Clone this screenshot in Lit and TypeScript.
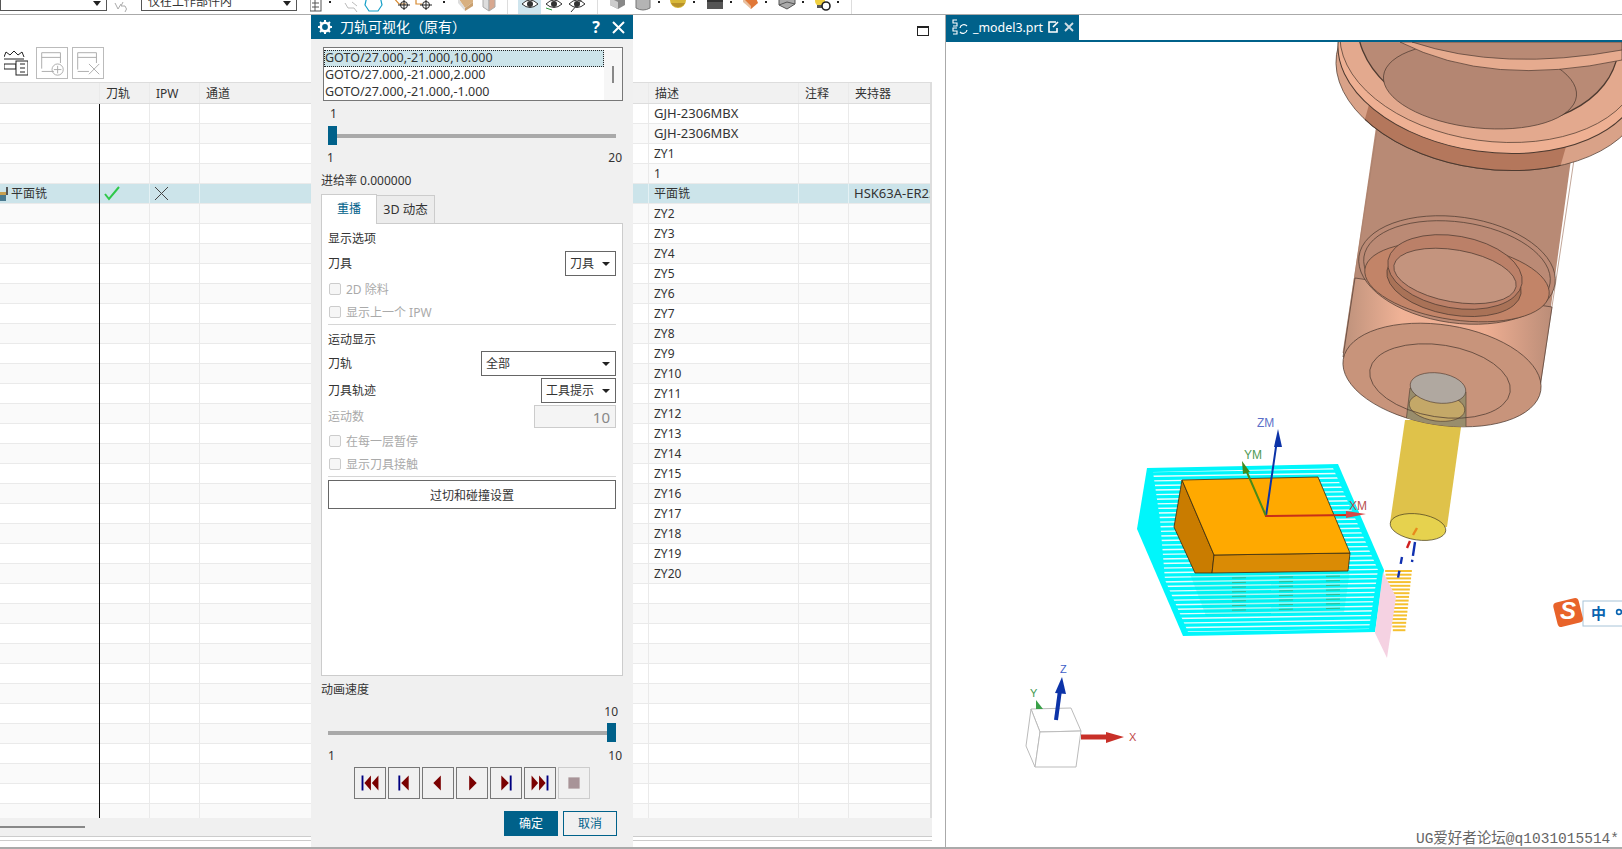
import { LitElement, css, html, svg } from 'lit';
import { customElement } from 'lit/decorators.js';

const descriptions = [
    'GJH-2306MBX', 'GJH-2306MBX', 'ZY1', '1', '平面铣',
    ...Array.from({ length: 19 }, (_, i) => `ZY${i + 2}`),
];

const range = (from: number, to: number, step: number) => {
    const out: number[] = [];
    for (let v = from; v <= to; v += step) out.push(v);
    return out;
};

const toolbarIcons = svg`
    <g transform="translate(-310,0)">
        <g fill="none" stroke="#555"><rect x="310" y="-4" width="11" height="15"/><path d="M315 -4v15M312 3h7M312 7h7"/></g>
        <rect x="329" y="1" width="2" height="2" fill="#222"/>
        <path d="M345 3l3 5h6l3 4M352 2l5 4" fill="none" stroke="#bbb"/>
        <path d="M367 -4l-2 9 4 6h9l4-6-2-9" fill="none" stroke="#16a0c8" stroke-width="1.2"/>
        <path d="M393 -3l6 7h7" fill="none" stroke="#d88a30" stroke-width="1.2"/>
        <g fill="none" stroke="#222"><circle cx="404" cy="5" r="3.5"/><path d="M404 -1v11M398 5h12"/></g>
        <path d="M416 -2v6h6" fill="none" stroke="#d88a30" stroke-width="1.2"/>
        <g fill="none" stroke="#222"><circle cx="426" cy="5" r="3.5"/><path d="M426 -1v11M420 5h12"/></g>
        <rect x="443" y="1" width="2" height="2" fill="#222"/>
        <path d="M458 -2l7 10 8-6v-4z" fill="#d8b080"/><path d="M458 -2v5l7 8v-3z" fill="#ddd"/><path d="M465 8v3l8-5v-4z" fill="#c9a070"/>
        <path d="M483 -2v9l6 4v-11z" fill="#ddd" stroke="#aaa"/><path d="M489 0v11l6-4v-9z" fill="#d8a890" stroke="#aaa"/>
        <rect x="507" y="0" width="1" height="14" fill="#ddd"/>
        <rect x="518" y="0" width="23" height="14" fill="#cfe5ee"/>
        ${[530, 554, 577].map((x, i) => svg`
            <path d="M${x - 8} 4q8-8 16 0q-8 7-16 0z" fill="#fff" stroke="#333"/>
            <circle cx="${x}" cy="4" r="3" fill="#333"/>
            ${i === 1 ? svg`<path d="M${x - 8} 8l6 2" stroke="#2a9a3a"/>` : ''}
            ${i === 2 ? svg`<path d="M${x - 6} 12l12-14" stroke="#333"/>` : ''}
        `)}
        <rect x="597" y="0" width="1" height="14" fill="#ddd"/>
        <path d="M610 -2v7l8 4 7-4v-7z" fill="#888"/><path d="M610 5l8 4v-7l-8-4z" fill="#ccc"/>
        <path d="M636 -2v10q7 4 14 0v-10z" fill="#b4b4b4" stroke="#777"/>
        <circle cx="678" cy="0" r="8" fill="#d8b838"/><path d="M671 3a8 8 0 0 0 14 0z" fill="#b8922a"/>
        <rect x="707" y="-2" width="16" height="11" fill="#555"/><rect x="707" y="-2" width="16" height="4" fill="#333"/>
        <path d="M743 -2l8 11 7-6-2-5z" fill="#e07838"/><path d="M743 -2v4l8 7v-3z" fill="#e8c0a0"/>
        <path d="M779 -2v7l8 4 8-5v-6z" fill="#aaa" stroke="#555"/><path d="M779 5l8-3 8 2" fill="none" stroke="#555"/>
        <circle cx="820" cy="1" r="5" fill="#f0d040"/><rect x="817" y="5" width="6" height="3" fill="#555"/>
        <circle cx="826" cy="6" r="4" fill="#fff" stroke="#222" stroke-width="1.6"/>
        <rect x="851" y="0" width="1" height="14" fill="#ddd"/>
        ${[658, 693, 730, 765, 802, 837].map((x) => svg`<rect x="${x}" y="1" width="2" height="2" fill="#222"/>`)}
    </g>
`;

const holder = svg`
    <defs>
        <clipPath id="shank-clip"><polygon points="1377,100 1343,353 1540,387 1580,100"/></clipPath>
        <clipPath id="nose-clip"><ellipse cx="1442" cy="375" rx="100" ry="50" transform="rotate(9 1442 375)"/></clipPath>
        <linearGradient id="band" x1="0" x2="1" y1="0" y2="0">
            <stop offset="0" stop-color="#bd917b"/>
            <stop offset="0.28" stop-color="#f0b296"/>
            <stop offset="0.68" stop-color="#eeae92"/>
            <stop offset="1" stop-color="#bb8d78"/>
        </linearGradient>
    </defs>
    <g stroke="#4d3a30" stroke-width="0.7">
        <!-- shank sits behind the flange -->
        <polygon points="1377,120 1343,353 1540,387 1575,130" fill="#b88a75" stroke="none"/>
        <line x1="1377" y1="130" x2="1343" y2="353" stroke="#a8806c"/>
        <line x1="1575" y1="153" x2="1540" y2="387" stroke="#a8806c"/>

        <!-- flange cut by the tab strip -->
        <ellipse cx="1490" cy="76" rx="155" ry="93" transform="rotate(8 1490 76)" fill="#d9a288"/>
        <ellipse cx="1490" cy="76" rx="155" ry="93" transform="rotate(8 1490 76)" fill="#b4775c" clip-path="url(#shank-clip)" stroke-width="1"/>
        <ellipse cx="1490" cy="60" rx="153" ry="92" transform="rotate(8 1490 60)" fill="#eeb093" stroke-width="1"/>
        <ellipse cx="1490" cy="50" rx="151" ry="91" transform="rotate(8 1490 50)" fill="#e3a98e"/>
        <ellipse cx="1488" cy="35" rx="131" ry="90" transform="rotate(8 1488 35)" fill="#b98a75" stroke-width="1.3"/>
        <ellipse cx="1480" cy="86" rx="97" ry="42" transform="rotate(6 1480 86)" fill="#b48672"/>
        <path d="M1400 42q90 46 222 18v-18z" fill="#e6ab8f"/>
        <path d="M1412 42q90 30 210 8v-8z" fill="#b98a75"/>

        <!-- lower collar: the light band is what the two ellipses leave free -->
        <path d="M1355 278 1343 357 1540 387 1552 307z" fill="url(#band)"/>
        <ellipse cx="1442" cy="375" rx="100" ry="50" transform="rotate(9 1442 375)" fill="#c8947b"/>
        <ellipse cx="1457" cy="270" rx="99" ry="53" transform="rotate(8 1457 270)" fill="#bb8a75"/>
        <ellipse cx="1457" cy="270" rx="94" ry="48" transform="rotate(8 1457 270)" fill="none"/>
        <ellipse cx="1457" cy="282" rx="93" ry="38" transform="rotate(8 1457 282)" fill="#c28468"/>
        <ellipse cx="1454" cy="282" rx="68" ry="33" transform="rotate(10 1454 282)" fill="#a97257"/>
        <ellipse cx="1455" cy="272" rx="68" ry="36" transform="rotate(10 1455 272)" fill="#bb8068"/>
        <ellipse cx="1455" cy="276" rx="62" ry="26" transform="rotate(10 1455 276)" fill="#c4947e"/>
    </g>
`;

const cyanPath = svg`
    <clipPath id="cyan-inner"><polygon points="1153,472 1333,468 1378,570 1369,629 1188,632 1165,580 1160,520"/></clipPath>
    <polygon points="1147,468 1338,464 1384,570 1375,632 1183,636 1137,529" fill="#00f6fb"/>
    <g clip-path="url(#cyan-inner)" stroke="#e8fdfd" stroke-width="1.4">
        ${range(470, 636, 4.6).map((y) => svg`<line x1="1130" y1="${y + 2}" x2="1390" y2="${y - 2}"/>`)}
    </g>
    <polygon points="1190,574 1350,570 1344,612 1206,616" fill="#00e8d8" fill-opacity="0.25"/>
    <g stroke="#2fb890" stroke-width="1" stroke-dasharray="14 33">
        ${range(578, 612, 4.6).map((y) => svg`<line x1="1232" y1="${y}" x2="1345" y2="${y - 2}"/>`)}
    </g>
`;

const block = svg`
    <g stroke="#3a2a10" stroke-width="0.8" stroke-linejoin="round">
        <polygon points="1182,480 1174,527 1195,573 1212,573 1214,555" fill="#c97c00"/>
        <polygon points="1214,555 1350,553 1348,571 1212,573" fill="#da8b05"/>
        <polygon points="1182,480 1318,477 1350,553 1214,555" fill="#ffa900"/>
    </g>
    <g stroke-linecap="round">
        <line x1="1266" y1="516" x2="1277" y2="440" stroke="#0c33a8" stroke-width="2"/>
        <polygon points="1278,429 1282,447 1274,447" fill="#0c33a8"/>
        <line x1="1266" y1="516" x2="1246" y2="470" stroke="#4a8a18" stroke-width="2"/>
        <polygon points="1242,461 1250,472 1243,474" fill="#3f8a1c"/>
        <line x1="1266" y1="516" x2="1350" y2="515" stroke="#c83018" stroke-width="2"/>
        <polygon points="1366,514 1346,511 1346,518" fill="#d84848"/>
    </g>
    <g font-family="Liberation Sans, sans-serif" font-size="12">
        <text x="1257" y="427" fill="#5c70c8">ZM</text>
        <text x="1244" y="459" fill="#4f9a55">YM</text>
        <text x="1349" y="510" fill="#b85050">XM</text>
    </g>
`;

const cutter = svg`
    <g stroke="#f5c030" stroke-width="2">
        ${range(571, 632, 3.7).map((y) => svg`<line x1="${1385 + (y - 570) * 0.13}" y1="${y}" x2="${1412 - (y - 570) * 0.11}" y2="${y}"/>`)}
    </g>
    <polygon points="1383,572 1375,633 1387,658 1396,597" fill="#f5d2e2"/>
    <path d="M1405 420 1390 523 1447 527 1462 420z" fill="#dfc24a"/>
    <ellipse cx="1418" cy="527" rx="28" ry="13" transform="rotate(8 1418 527)" fill="#e6d24e" stroke="#4a4020" stroke-width="0.7"/>
    <line x1="1417" y1="528" x2="1413" y2="535" stroke="#e88a1c" stroke-width="2.4"/>
    <line x1="1410" y1="541" x2="1407" y2="548" stroke="#d02020" stroke-width="2.4"/>
    <line x1="1415" y1="542" x2="1412" y2="562" stroke="#1030b0" stroke-width="2.4" stroke-dasharray="14 4"/>
    <line x1="1402" y1="557" x2="1398" y2="578" stroke="#1030b0" stroke-width="2.4" stroke-dasharray="7 7"/>
`;

const overlayTip = svg`
    <g clip-path="url(#nose-clip)" stroke="#4d3a30" stroke-width="0.6">
        <path d="M1410 388 1405 430 1466 430 1466 392z" fill="#998d6c"/>
        <ellipse cx="1437" cy="407" rx="28" ry="14" transform="rotate(8 1437 407)" fill="#c4a868"/>
        <ellipse cx="1438" cy="388" rx="28" ry="15" transform="rotate(8 1438 388)" fill="#b0a8a0"/>
    </g>
    <ellipse cx="1440" cy="381" rx="71" ry="36" transform="rotate(9 1440 381)" fill="none" stroke="#4d3a30" stroke-width="0.7"/>
`;

const triad = svg`
    <g fill="#fff" stroke="#bbb" stroke-width="1">
        <polygon points="1031,709 1071,708 1081,731 1040,732"/>
        <polygon points="1031,709 1040,732 1035,767 1026,746"/>
        <polygon points="1040,732 1081,731 1076,767 1035,767"/>
    </g>
    <polygon points="1036,700 1043,709 1036,709" fill="#3aa048"/>
    <line x1="1056" y1="720" x2="1060" y2="690" stroke="#0c33a8" stroke-width="4"/>
    <polygon points="1062,677 1066,694 1055,693" fill="#0c33a8"/>
    <line x1="1081" y1="737" x2="1108" y2="737" stroke="#c83028" stroke-width="5"/>
    <polygon points="1124,737 1106,732 1106,743" fill="#c83028"/>
    <g font-family="Liberation Sans, sans-serif" font-size="11">
        <text x="1060" y="673" fill="#4060c8">Z</text>
        <text x="1030" y="697" fill="#3f9a50">Y</text>
        <text x="1129" y="741" fill="#c04848">X</text>
    </g>
`;

const transport = [
    svg`<rect x="7" y="8" width="2" height="16" fill="#000080"/><path d="M10 16l7-8v16zM18 16l7-8v16z" fill="#7a0000"/>`,
    svg`<rect x="10" y="8" width="2" height="16" fill="#000080"/><path d="M13 16l8-8v16z" fill="#7a0000"/>`,
    svg`<path d="M11 16l8-8v16z" fill="#7a0000"/>`,
    svg`<path d="M21 16l-8-8v16z" fill="#7a0000"/>`,
    svg`<rect x="20" y="8" width="2" height="16" fill="#000080"/><path d="M19 16l-8-8v16z" fill="#7a0000"/>`,
    svg`<rect x="23" y="8" width="2" height="16" fill="#000080"/><path d="M14 16l-7-8v16zM22 16l-7-8v16z" fill="#7a0000"/>`,
    svg`<rect x="10" y="10" width="12" height="12" fill="#a89498"/>`,
];

@customElement('app-root')
export class AppRoot extends LitElement {
    static styles = css`
        :host {
            display: block;
            font-family: "Noto Sans", "Noto Sans CJK SC", sans-serif;
            font-size: 12px;
            color: #333;
        }

        .app {
            position: relative;
            width: 1622px;
            height: 849px;
            overflow: hidden;
            background: #fff;
            display: flex;
            flex-direction: column;
        }

        /* ---- top toolbar, mostly scrolled off ---- */
        .topbar {
            height: 15px;
            flex: none;
            box-sizing: border-box;
            border-bottom: 1px solid #aaa;
            display: flex;
            overflow: hidden;
        }

        .combo {
            height: 11px;
            box-sizing: border-box;
            border: 1px solid #555;
            border-top: none;
            position: relative;
            line-height: 4px;
            padding-left: 6px;
            overflow: hidden;
            flex: none;
        }

        .combo::after {
            content: '';
            position: absolute;
            right: 5px;
            top: 1px;
            border: 4px solid transparent;
            border-top: 5px solid #222;
        }

        .combo.a { width: 107px; }
        .combo.b { width: 156px; }
        .undo { flex: none; }
        .strip { margin-left: 13px; flex: none; }

        /* ---- body ---- */
        .main {
            flex: 1;
            display: flex;
            min-height: 0;
        }

        .left {
            width: 946px;
            flex: none;
            box-sizing: border-box;
            border-right: 1px solid #aaa;
            display: flex;
            flex-direction: column;
        }

        .left-head {
            height: 67px;
            flex: none;
            display: flex;
            justify-content: space-between;
            box-sizing: border-box;
            padding-top: 32px;
        }

        .tools { display: flex; gap: 4px; padding-left: 4px; }
        .tools .tool { width: 32px; height: 32px; box-sizing: border-box; border: 1px solid #bbb; }
        .tools .crown { margin-right: 4px; margin-top: 3px; }

        .maximize {
            width: 12px;
            height: 10px;
            box-sizing: border-box;
            border: 1px solid #222;
            border-top-width: 2px;
            margin: -21px 16px 0 0;
        }

        .table {
            width: 932px;
            box-sizing: border-box;
            border-top: 1px solid #ddd;
            border-right: 2px solid #ddd;
            flex: none;
        }

        .row {
            display: grid;
            grid-template-columns: 100px 50px 50px 449px 150px 50px 81px;
            height: 20px;
            box-sizing: border-box;
            border-bottom: 1px solid #eaeaea;
            background: #fff;
            line-height: 20px;
        }

        .row.alt { background: #fafafa; }
        .row.selected { background: #cce4ea; }
        .row.head { height: 21px; background: #f1f1f1; border-bottom: 1px solid #ddd; line-height: 21px; }

        .cell {
            border-right: 1px solid #eaeaea;
            padding-left: 5px;
            white-space: nowrap;
            overflow: hidden;
        }

        .cell.long { font-size: 13px; line-height: 18px; }
        .selected .cell.long { line-height: 19px; }
        .row:not(.head) .cell:first-child { border-right: 1px solid #111; padding-left: 0; margin-bottom: -1px; }
        .head .cell:nth-child(n + 2) { padding-left: 6px; }
        .selected .cell { border-right-color: #e4f1f4; }
        .row.selected .name { display: flex; align-items: center; gap: 2px; }
        .cell:last-child { border-right: none; }
        .glyph { display: block; margin: 2px 0 0 -1px; }

        .body { height: 714px; overflow: hidden; }

        .hscroll {
            width: 932px;
            height: 18px;
            flex: none;
            background: #f0f0f0;
            box-sizing: border-box;
            padding-top: 8px;
        }

        .hscroll div { width: 85px; height: 2px; background: #888; }

        .rules {
            flex: 1;
            width: 932px;
            border-top: 1px solid #ccc;
        }

        .rules div { margin-top: 3px; border-top: 1px solid #ccc; }

        .bottom-line { height: 2px; background: #aaa; flex: none; margin-top: auto; }

        /* ---- graphics window ---- */
        .view {
            flex: 1;
            display: flex;
            flex-direction: column;
            min-width: 0;
        }

        .tabs {
            height: 27px;
            flex: none;
            box-sizing: border-box;
            border-bottom: 2px solid #00618a;
        }

        .tab {
            width: 133px;
            height: 25px;
            background: #00618a;
            color: #fff;
            font-size: 12.4px;
            display: flex;
            align-items: center;
            box-sizing: border-box;
            padding: 0 0 1px 6px;
            gap: 3px;
        }

        .tab .name { margin-left: 1px; }
        .tab .doc { margin-left: 2px; }
        .tab .shut { margin-left: 1px; }

        .scene { display: block; flex: 1; min-height: 0; }

        /* ---- floating things ---- */
        .ime {
            position: absolute;
            left: 1553px;
            top: 597px;
        }

        .mark {
            position: absolute;
            right: 3px;
            top: 830px;
            font-family: "Liberation Mono", "Noto Sans CJK SC", monospace;
            font-size: 14.5px;
            line-height: 18px;
            color: #666;
            white-space: nowrap;
        }

        /* ---- dialog ---- */
        .dialog {
            position: absolute;
            left: 311px;
            top: 15px;
            width: 322px;
            height: 832px;
            background: #f0f0f0;
            display: flex;
            flex-direction: column;
            line-height: 16px;
        }

        .title {
            height: 24px;
            flex: none;
            background: #00618a;
            color: #fff;
            font-size: 14px;
            display: flex;
            align-items: center;
            padding: 0 8px 0 7px;
        }

        .title .text { margin-left: 8px; flex: 1; }
        .title .help { font-weight: 700; font-size: 16px; margin-right: 12px; }

        .list {
            margin: 8px 0 0 12px;
            width: 300px;
            height: 54px;
            box-sizing: border-box;
            border: 1px solid #777;
            background: #fff;
            padding-top: 2px;
            display: flex;
            flex: none;
        }

        .lines { width: 280px; flex: none; font-size: 12.5px; }
        .line { height: 17px; line-height: 13px; box-sizing: border-box; border: 1px solid transparent; }
        .line.on { background: #cce4ea; border: 1px dotted #222; }

        .vbar { flex: 1; background: #f6f6f6; display: flex; justify-content: center; }
        .vbar div { width: 2px; height: 17px; margin-top: 16px; background: #888; }

        .t { height: 14px; flex: none; }
        .t.tight { line-height: 14px; }
        .pl10 { padding-left: 10px; }
        .pl19 { padding-left: 19px; }
        .right { text-align: right; padding-right: 15px; }

        .mt2 { margin-top: 2px; }
        .mt5 { margin-top: 5px; }
        .mt6 { margin-top: 6px; }
        .mt7 { margin-top: 7px; }
        .mt8 { margin-top: 8px; }
        .mt9 { margin-top: 9px; }

        .slider {
            height: 19px;
            margin: 5px 0 0 17px;
            width: 288px;
            flex: none;
            display: flex;
            align-items: center;
        }

        .thumb { width: 9px; height: 19px; background: #00618a; flex: none; }
        .track { flex: 1; height: 4px; background: #a9a9a9; }

        .ends {
            display: flex;
            justify-content: space-between;
            padding: 0 11px 0 17px;
        }

        .ends.first { padding-left: 16px; }

        .tabbar {
            display: flex;
            margin: 7px 0 -1px 10px;
            height: 30px;
            flex: none;
            align-items: flex-end;
        }

        .tb {
            box-sizing: border-box;
            border: 1px solid #ccc;
            display: flex;
            align-items: center;
            justify-content: center;
            position: relative;
        }

        .tb.on { width: 56px; height: 30px; background: #fff; border-bottom: none; color: #00618a; padding-bottom: 1px; z-index: 1; }
        .tb.off { width: 58px; height: 29px; border-left: none; background: #ececec; font-size: 12.5px; padding-top: 1px; }

        .panel {
            margin-left: 10px;
            width: 302px;
            height: 453px;
            flex: none;
            box-sizing: border-box;
            border: 1px solid #ccc;
            background: #fff;
            padding: 7px 6px 0;
            display: flex;
            flex-direction: column;
        }

        .field { display: flex; justify-content: space-between; align-items: center; flex: none; }

        .select {
            height: 25px;
            box-sizing: border-box;
            border: 1px solid #666;
            background: #fff;
            padding-left: 4px;
            display: flex;
            align-items: center;
            justify-content: space-between;
        }

        .select::after {
            content: '';
            border: 4px solid transparent;
            border-top: 4px solid #222;
            border-bottom: none;
            margin-right: 5px;
        }

        .w51 { width: 51px; }
        .w75 { width: 75px; }
        .w135 { width: 135px; }

        .number {
            width: 82px;
            height: 23px;
            box-sizing: border-box;
            border: 1px solid #ccc;
            background: #f4f4f4;
            color: #888;
            text-align: right;
            padding-right: 5px;
            font-size: 15px;
            line-height: 22px;
        }

        .check {
            display: flex;
            align-items: flex-start;
            gap: 5px;
            height: 14px;
            color: #aaa;
            flex: none;
        }

        .check i {
            width: 12px;
            height: 12px;
            box-sizing: border-box;
            border: 1px solid #ccc;
            border-radius: 2px;
            background: #f6f6f6;
            margin: 1px 0 0 1px;
        }

        .muted { color: #aaa; }
        .sep { height: 1px; background: #d6d6d6; flex: none; }

        .wide {
            height: 29px;
            box-sizing: border-box;
            border: 1px solid #666;
            padding-top: 2px;
            display: flex;
            align-items: center;
            justify-content: center;
            flex: none;
            margin-top: 3px;
        }

        .players { display: flex; gap: 2px; margin: 5px 0 0 43px; flex: none; }

        .player {
            width: 32px;
            height: 32px;
            box-sizing: border-box;
            border: 1px solid #777;
            background: #f0f0f0;
            display: block;
        }

        .player.off { border-color: #ccc; }

        .footer { display: flex; gap: 5px; margin: 12px 0 0 193px; flex: none; }

        .btn {
            width: 54px;
            height: 25px;
            box-sizing: border-box;
            border: 1px solid #00618a;
            display: flex;
            align-items: center;
            justify-content: center;
            color: #00618a;
            background: #f0f0f0;
        }

        .btn.primary { background: #00618a; color: #fff; }
    `;

    private renderRow(i: number) {
        const selected = i === 4;
        const classes = `row ${selected ? 'selected' : i % 2 ? 'alt' : ''}`;
        const desc = descriptions[i] ?? '';
        return html`
            <div class=${classes}>
                <div class="cell name">
                    ${selected ? html`
                        <svg width="9" height="16" viewBox="0 0 9 16"><path d="M0 6h6v9H0z" fill="#4a7a90"/><path d="M0 6h6v3H0z" fill="#c8a050"/><path d="M6 1h2v8H6z" fill="#555"/></svg>
                        平面铣` : ''}
                </div>
                <div class="cell">
                    ${selected ? html`<svg class="glyph" width="16" height="15" viewBox="0 0 16 15"><path d="M1 8l4 5L15 1" fill="none" stroke="#2fc84a" stroke-width="2"/></svg>` : ''}
                </div>
                <div class="cell">
                    ${selected ? html`<svg class="glyph" width="16" height="15" viewBox="0 0 16 15"><path d="M1 1l13 13M14 1L1 14" fill="none" stroke="#444"/></svg>` : ''}
                </div>
                <div class="cell"></div>
                <div class="cell ${desc.length > 5 ? 'long' : ''}">${desc}</div>
                <div class="cell"></div>
                <div class="cell long">${selected ? 'HSK63A-ER25' : ''}</div>
            </div>
        `;
    }

    private renderDialog() {
        return html`
            <div class="dialog">
                <div class="title">
                    <svg width="14" height="14" viewBox="0 0 14 14">
                        <circle cx="7" cy="7" r="4.2" fill="none" stroke="#fff" stroke-width="2.6"/>
                        <path d="M7 0v3M7 11v3M0 7h3M11 7h3M2 2l2 2M10 10l2 2M12 2l-2 2M4 10l-2 2" stroke="#fff" stroke-width="2"/>
                    </svg>
                    <span class="text">刀轨可视化（原有）</span>
                    <span class="help">?</span>
                    <svg width="13" height="13" viewBox="0 0 13 13"><path d="M1 1l11 11M12 1L1 12" stroke="#fff" stroke-width="2"/></svg>
                </div>

                <div class="list">
                    <div class="lines">
                        <div class="line on">GOTO/27.000,-21.000,10.000</div>
                        <div class="line">GOTO/27.000,-21.000,2.000</div>
                        <div class="line">GOTO/27.000,-21.000,-1.000</div>
                    </div>
                    <div class="vbar"><div></div></div>
                </div>

                <div class="t tight mt6 pl19">1</div>
                <div class="slider"><div class="thumb"></div><div class="track"></div></div>
                <div class="t ends first mt5"><span>1</span><span>20</span></div>
                <div class="t pl10 mt9">进给率 0.000000</div>

                <div class="tabbar">
                    <div class="tb on">重播</div>
                    <div class="tb off">3D 动态</div>
                </div>
                <div class="panel">
                    <div class="t">显示选项</div>
                    <div class="field mt6"><span>刀具</span><div class="select w51">刀具</div></div>
                    <div class="check mt6"><i></i>2D 除料</div>
                    <div class="check mt9"><i></i>显示上一个 IPW</div>
                    <div class="sep mt5"></div>
                    <div class="t mt7">运动显示</div>
                    <div class="field mt5"><span>刀轨</span><div class="select w135">全部</div></div>
                    <div class="field mt2"><span>刀具轨迹</span><div class="select w75">工具提示</div></div>
                    <div class="field mt2"><span class="muted">运动数</span><div class="number">10</div></div>
                    <div class="check mt6"><i></i>在每一层暂停</div>
                    <div class="check mt9"><i></i>显示刀具接触</div>
                    <div class="sep mt5"></div>
                    <div class="wide">过切和碰撞设置</div>
                </div>

                <div class="t pl10 mt6">动画速度</div>
                <div class="t mt8 right">10</div>
                <div class="slider"><div class="track"></div><div class="thumb"></div></div>
                <div class="t ends mt6"><span>1</span><span>10</span></div>

                <div class="players">
                    ${transport.map((icon, i) => html`
                        <svg class="player ${i === 6 ? 'off' : ''}" viewBox="0 0 32 32" width="32" height="32">${icon}</svg>
                    `)}
                </div>

                <div class="footer">
                    <div class="btn primary">确定</div>
                    <div class="btn">取消</div>
                </div>
            </div>
        `;
    }

    protected render() {
        return html`
            <div class="app">
                <div class="topbar">
                    <div class="combo a"></div>
                    <svg class="undo" width="34" height="14" viewBox="0 0 34 14"><path d="M8 3l3 6 3-5M16 2l-2 4h4q3 3 0 6" fill="none" stroke="#aaa"/></svg>
                    <div class="combo b">仅在工作部件内</div>
                    <svg class="strip" width="560" height="14" viewBox="0 0 560 14">${toolbarIcons}</svg>
                </div>

                <div class="main">
                    <div class="left">
                        <div class="left-head">
                            <div class="tools">
                                <svg class="crown" width="24" height="26" viewBox="0 0 24 26" fill="none" stroke="#222">
                                    <path d="M0 7l2-5 4 3 4-4 4 4 4-3 2 5M0 9h20M0 14h12v5H0z"/>
                                    <rect x="12" y="11" width="12" height="14" fill="#fff"/>
                                    <path d="M16 14h5M16 18h5M16 22h5"/>
                                </svg>
                                <svg class="tool" width="32" height="32" viewBox="0 0 32 32" fill="none" stroke="#aaa">
                                    <path d="M5 22V5h20v11M5 10h20M5 25h13"/><circle cx="22" cy="23" r="6"/><path d="M22 19v8M18 23h8"/>
                                </svg>
                                <svg class="tool" width="32" height="32" viewBox="0 0 32 32" fill="none" stroke="#aaa">
                                    <path d="M5 23V5h20v11M5 10h20M5 25h12M17 17l11 11M28 17L17 28"/>
                                </svg>
                            </div>
                            <div class="maximize"></div>
                        </div>
                        <div class="table">
                            <div class="row head">
                                <div class="cell"></div>
                                <div class="cell">刀轨</div>
                                <div class="cell">IPW</div>
                                <div class="cell">通道</div>
                                <div class="cell">描述</div>
                                <div class="cell">注释</div>
                                <div class="cell">夹持器</div>
                            </div>
                            <div class="body">${range(0, 35, 1).map((i) => this.renderRow(i))}</div>
                        </div>
                        <div class="hscroll"><div></div></div>
                        <div class="rules"><div></div></div>
                        <div class="bottom-line"></div>
                    </div>

                    <div class="view">
                        <div class="tabs">
                            <div class="tab">
                                <svg width="17" height="16" viewBox="0 0 17 16" fill="none" stroke="#fff">
                                    <path d="M5 1H1v3h4v3H1M5 9H1v3h4v3H1" stroke-width="1.1"/>
                                    <path d="M8 9a4 4 0 0 1 7-2M15 11a4 4 0 0 1-7 2" stroke-width="1.2"/>
                                </svg>
                                <span class="name">_model3.prt</span>
                                <svg class="doc" width="12" height="12" viewBox="0 0 12 12" fill="none" stroke="#fff" stroke-width="1.6"><path d="M9 7v4H1V1h7M5 6l5-5"/></svg>
                                <svg class="shut" width="10" height="10" viewBox="0 0 10 10"><path d="M1 1l8 8M9 1L1 9" stroke="#d0dde4" stroke-width="1.8"/></svg>
                            </div>
                        </div>
                        <svg class="scene" width="676" height="805" viewBox="946 42 676 805">
                            ${cyanPath}
                            ${block}
                            ${cutter}
                            ${holder}
                            ${overlayTip}
                            ${triad}
                        </svg>
                        <div class="bottom-line"></div>
                    </div>
                </div>

                ${this.renderDialog()}

                <svg class="ime" width="69" height="31" viewBox="0 0 69 31">
                    <rect x="30" y="4" width="40" height="25" fill="#fff" stroke="#a8c4d8"/>
                    <rect x="2" y="3" width="26" height="25" rx="4" fill="#e8632a" transform="rotate(-14 15 15)"/>
                    <text x="15" y="22" text-anchor="middle" font-family="Liberation Sans, sans-serif" font-weight="700" font-style="italic" font-size="24" fill="#fff">S</text>
                    <text x="38" y="22" font-family="Noto Sans CJK SC, sans-serif" font-weight="700" font-size="15" fill="#0a64b0">中</text>
                    <circle cx="66" cy="15" r="2.4" fill="none" stroke="#0a64b0" stroke-width="1.6"/>
                </svg>

                <div class="mark">UG爱好者论坛@q1031015514*</div>
            </div>
        `;
    }
}
